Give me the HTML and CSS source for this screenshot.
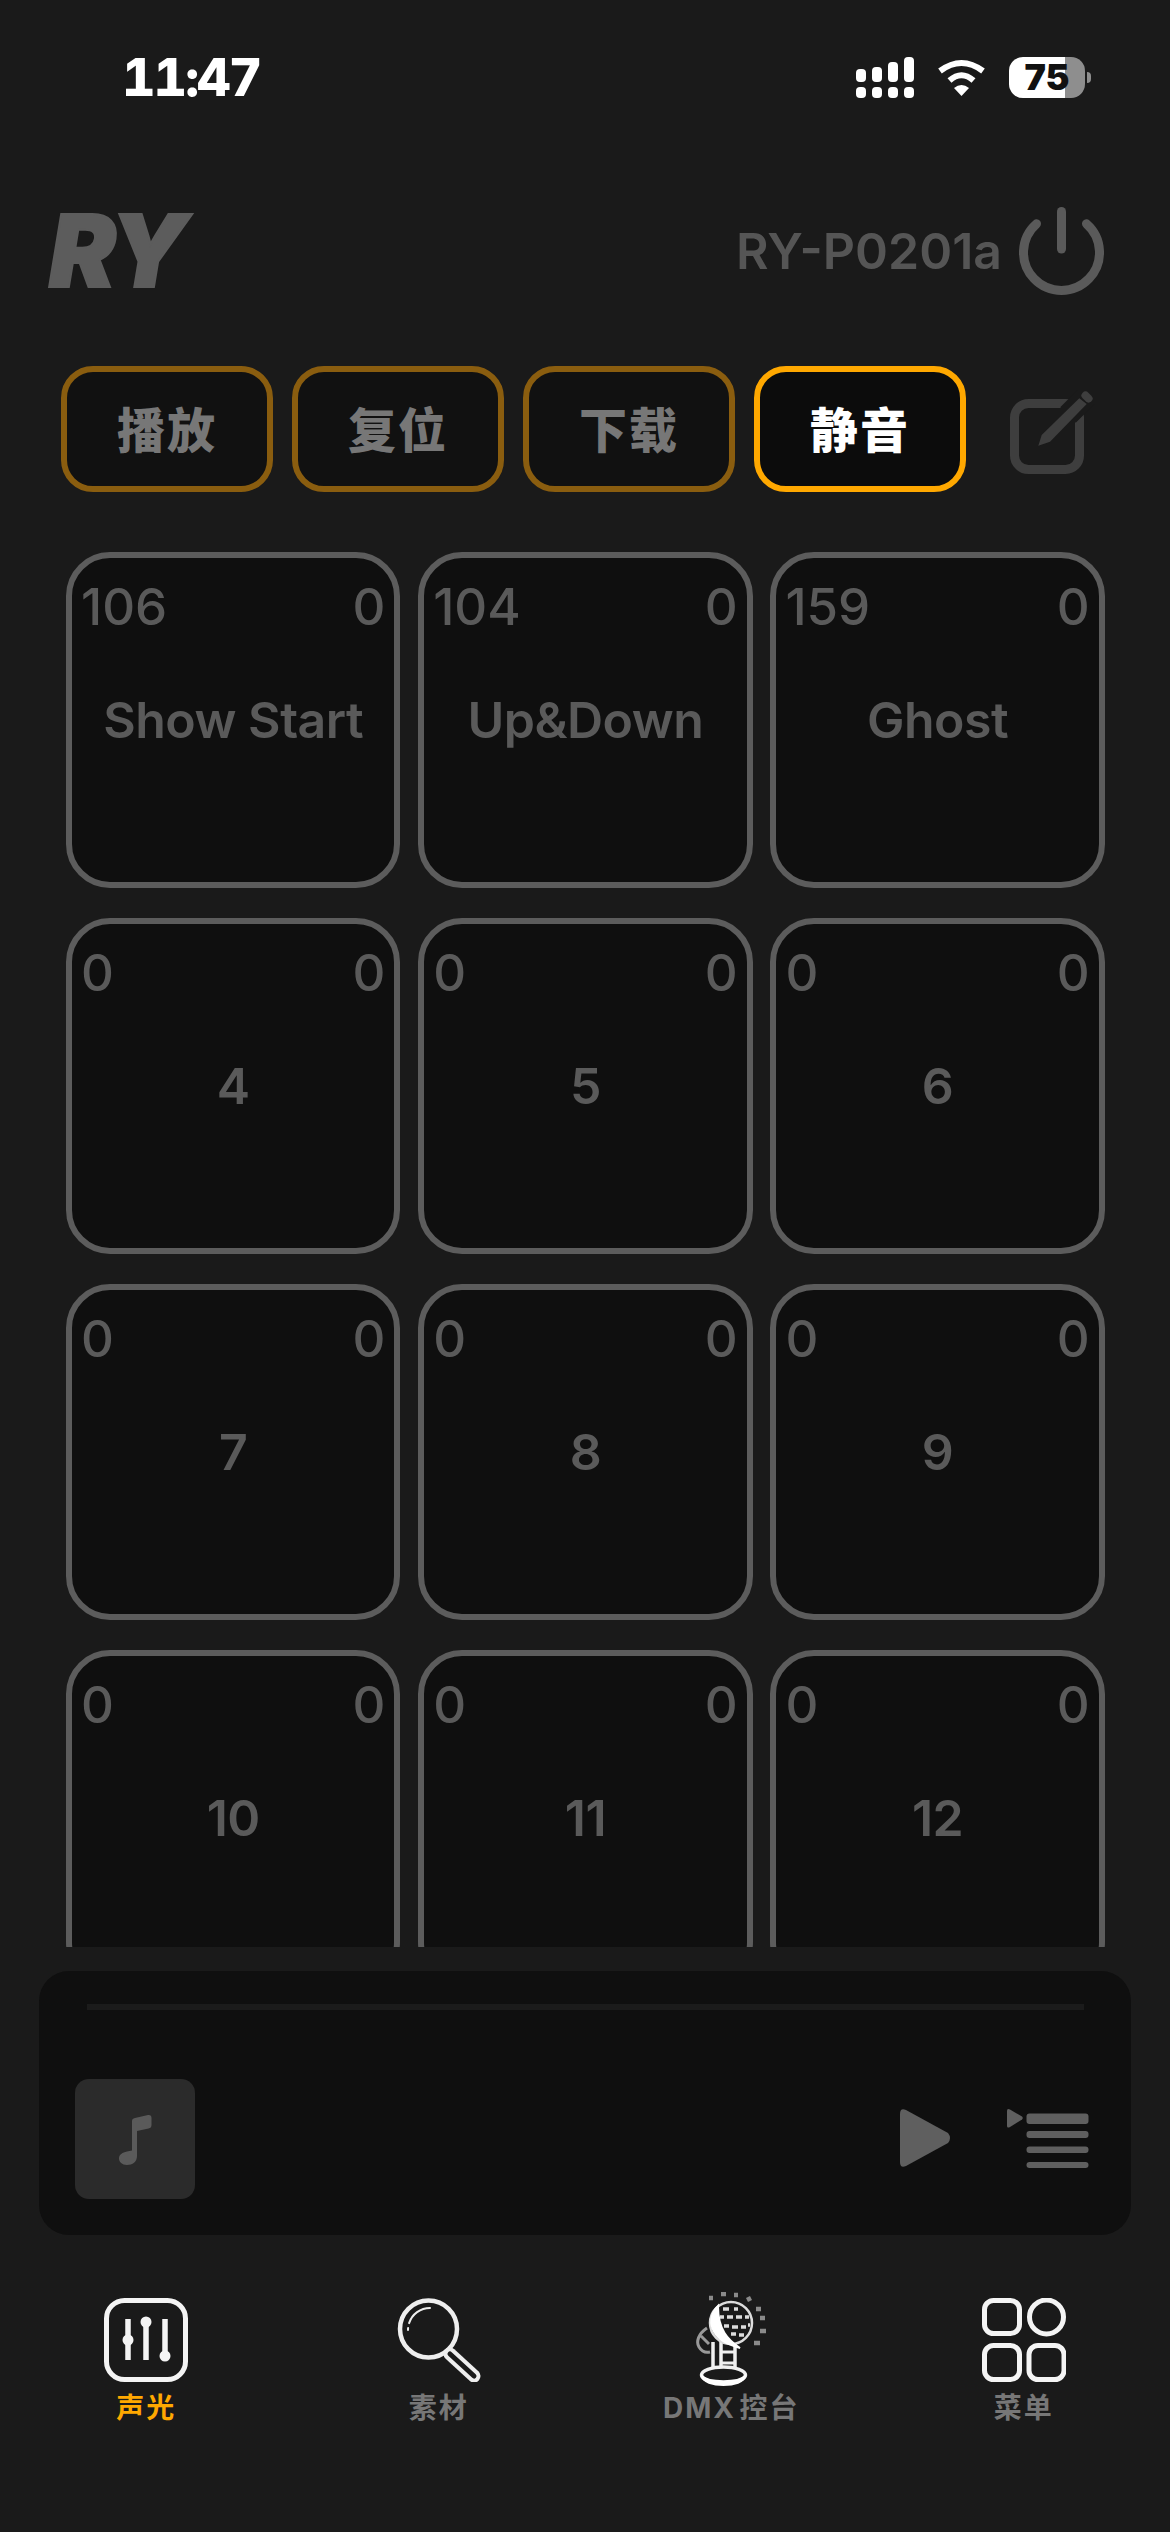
FILE: index.html
```html
<!DOCTYPE html>
<html lang="zh-CN">
<head>
    <meta charset="UTF-8">
    <meta name="viewport" content="width=device-width, initial-scale=1.0">
    <title>RY</title>
    <link rel="stylesheet" href="styles.css">
</head>
<body>
<div class="screen">
    <!-- Status bar -->
    <div class="status-bar">
        <span class="time">11:47</span>
        <div class="status-icons">
            <svg class="signal" width="58" height="41" viewBox="0 0 58 41" fill="#fff">
                <rect x="0" y="12" width="10" height="13" rx="4"/>
                <rect x="16" y="10" width="10" height="15" rx="4"/>
                <rect x="32" y="5" width="10" height="20" rx="4"/>
                <rect x="48" y="0" width="10" height="25" rx="4"/>
                <rect x="0" y="30" width="10" height="11" rx="4"/>
                <rect x="16" y="30" width="10" height="11" rx="4"/>
                <rect x="32" y="30" width="10" height="11" rx="4"/>
                <rect x="48" y="30" width="10" height="11" rx="4"/>
            </svg>
            <svg class="wifi" width="49" height="37" viewBox="0 0 49 37">
                <path d="M3 12 Q24.5 -4 46 12" fill="none" stroke="#fff" stroke-width="6"/>
                <path d="M12.5 21.5 Q24.5 11 36.5 21.5" fill="none" stroke="#fff" stroke-width="6"/>
                <path d="M17 29 Q24.5 23 32 29 L24.5 37 Z" fill="#fff"/>
            </svg>
            <div class="battery">
                <div class="battery-body"><span>75</span></div>
                <div class="battery-nub"></div>
            </div>
        </div>
    </div>

    <!-- Logo and device -->
    <div class="header">
        <div class="logo">RY</div>
        <div class="device">
            <span class="device-name">RY-P0201a</span>
            <svg width="85" height="88" viewBox="0 0 85 88" fill="none" stroke="#5a5a5a" stroke-width="9" stroke-linecap="round">
                <path d="M17.5 16.8 A38 38 0 1 0 67.5 16.8"/>
                <path d="M42.5 4.5 V42"/>
            </svg>
        </div>
    </div>

    <!-- Action buttons -->
    <div class="toolbar">
        <button class="action">播放</button>
        <button class="action">复位</button>
        <button class="action">下载</button>
        <button class="action active">静音</button>
        <svg class="edit-icon" width="85" height="84" viewBox="0 -2 85 84" fill="none">
            <rect x="4.500" y="11.500" width="65" height="66" rx="14" stroke="#3e3e3e" stroke-width="9"/>
            <!-- gap cut out of the box around the pencil -->
            <path d="M58 23 L90 -9" stroke="#1a1a1a" stroke-width="22"/>
            <path d="M28.300 53.700 L31.700 43 L69.300 6.300 L76.700 12 L40 49.700 Z" fill="#3e3e3e"/>
            <path d="M75.500 3.500 L78.500 6.500" stroke="#3e3e3e" stroke-width="8" stroke-linecap="round"/>
        </svg>
    </div>

    <!-- Scene pads, the last row runs under the player -->
    <div class="pads">
        <div class="pad">
            <div class="pad-top"><span>106</span><span>0</span></div>
            <div class="pad-name">Show Start</div>
        </div>
        <div class="pad">
            <div class="pad-top"><span>104</span><span>0</span></div>
            <div class="pad-name">Up&amp;Down</div>
        </div>
        <div class="pad">
            <div class="pad-top"><span>159</span><span>0</span></div>
            <div class="pad-name">Ghost</div>
        </div>
        <div class="pad">
            <div class="pad-top"><span>0</span><span>0</span></div>
            <div class="pad-name">4</div>
        </div>
        <div class="pad">
            <div class="pad-top"><span>0</span><span>0</span></div>
            <div class="pad-name">5</div>
        </div>
        <div class="pad">
            <div class="pad-top"><span>0</span><span>0</span></div>
            <div class="pad-name">6</div>
        </div>
        <div class="pad">
            <div class="pad-top"><span>0</span><span>0</span></div>
            <div class="pad-name">7</div>
        </div>
        <div class="pad">
            <div class="pad-top"><span>0</span><span>0</span></div>
            <div class="pad-name">8</div>
        </div>
        <div class="pad">
            <div class="pad-top"><span>0</span><span>0</span></div>
            <div class="pad-name">9</div>
        </div>
        <div class="pad">
            <div class="pad-top"><span>0</span><span>0</span></div>
            <div class="pad-name">10</div>
        </div>
        <div class="pad">
            <div class="pad-top"><span>0</span><span>0</span></div>
            <div class="pad-name">11</div>
        </div>
        <div class="pad">
            <div class="pad-top"><span>0</span><span>0</span></div>
            <div class="pad-name">12</div>
        </div>
    </div>

    <!-- Player -->
    <div class="player">
        <div class="progress"></div>
        <div class="player-row">
            <div class="cover">
                <svg width="33" height="51" viewBox="0 0 33 51" fill="#5a5a5a">
                    <path d="M13 7 Q13 4.500 16 4 L29 1 Q32.500 0.500 32.500 4 V11 Q32.500 14 29.500 14.500 L18 17 V42 C18 48 13.500 51 8 51 C3 51 0 48 0 44.500 C0 40.500 3.500 38.500 8 37.500 L13 36.500 Z"/>
                </svg>
            </div>
            <div class="player-controls">
                <svg width="52" height="58" viewBox="0 0 52 58" fill="#5f5f5f">
                    <path d="M0 5 Q0 -1.500 6 1 L48 24 Q52 29 48 34 L6 57 Q0 59.500 0 53 Z"/>
                </svg>
                <svg width="82" height="60" viewBox="0 0 82 60" fill="#5f5f5f">
                    <path d="M0 2 Q0 -1 3 0.500 L15 7.500 Q16.500 9 15 10.500 L3 18 Q0 19.500 0 17 Z"/>
                    <rect x="19.500" y="4.500" width="62" height="10.500" rx="3"/>
                    <rect x="19.500" y="22" width="62" height="7" rx="3"/>
                    <rect x="19.500" y="37.500" width="62" height="6.500" rx="3"/>
                    <rect x="19.500" y="53" width="62" height="6" rx="3"/>
                </svg>
            </div>
        </div>
    </div>

    <!-- Bottom tabs -->
    <div class="tabs">
        <div class="tab current">
            <div class="tab-icon">
                <svg width="84" height="84" viewBox="0 0 84 84" fill="none" stroke="#f4f4f4">
                    <rect x="2.500" y="2.500" width="79" height="79" rx="18" stroke-width="5"/>
                    <path d="M24 21 V62 M42 21 V62 M61 21 V62" stroke-width="5.500"/>
                    <circle cx="24" cy="42" r="5.500" fill="#f4f4f4" stroke="none"/>
                    <circle cx="42" cy="24" r="5.500" fill="#f4f4f4" stroke="none"/>
                    <circle cx="61" cy="58" r="5.500" fill="#f4f4f4" stroke="none"/>
                </svg>
            </div>
            <span class="tab-label">声光</span>
        </div>
        <div class="tab">
            <div class="tab-icon">
                <svg width="84" height="84" viewBox="0 0 84 84" fill="none" stroke="#eee" stroke-linecap="round">
                    <circle cx="31.500" cy="31" r="28.500" stroke-width="4.500"/>
                    <path d="M11 32 A22 22 0 0 1 33 10" stroke-width="2" stroke-dasharray="2 5 30"/>
                    <path d="M53 56 L77 78" stroke-width="13"/>
                    <path d="M53 56 L77 78" stroke="#1a1a1a" stroke-width="5"/>
                </svg>
            </div>
            <span class="tab-label">素材</span>
        </div>
        <div class="tab">
            <div class="tab-icon">
                <svg width="71" height="96" viewBox="0 0 71 96" fill="none" stroke="#f0f0f0">
                    <!-- leaves behind the lamp -->
                    <path d="M11 36 C2 42 0 50 3 55 C6 60 10 61 14 60 M5 44 L13 52" stroke="#999" stroke-width="3"/>
                    <!-- stand -->
                    <path d="M17 50 V76 M25 46 V76 M39 52 V76" stroke-width="3.500"/>
                    <path d="M25 60 H39 M25 71 H39" stroke-width="3"/>
                    <!-- lamp head -->
                    <circle cx="35" cy="31" r="21" stroke="#ddd" stroke-width="2.500"/>
                    <path d="M22 14 C10 26 12 48 44 56 C32 48 22 38 22 14 Z" fill="#fff" stroke="#fff" stroke-width="2"/>
                    <path d="M27 17 h6 M38 17 h4 M24 25 h4 M31 25 h6 M40 25 h6 M49 25 h4 M28 34 h5 M36 35 h6 M45 35 h5 M52 33 h2 M35 42 h5 M43 43 h5" stroke="#ddd" stroke-width="3.500"/>
                    <!-- base -->
                    <ellipse cx="27.500" cy="83" rx="22" ry="8" stroke-width="3.500"/>
                    <path d="M6 84 C12 91 43 91 49 84 C48 96 7 96 6 84 Z" fill="#fff" stroke="#fff" stroke-width="2"/>
                    <!-- light rays -->
                    <path d="M13 6 h4 M25 2 h5 M38 3 h4 M51 8 l4 -2 M60 17 h5 M64 26 h5 M64 39 h6 M58 51 h6" stroke="#8a8a8a" stroke-width="4.500"/>
                </svg>
            </div>
            <span class="tab-label">DMX 控台</span>
        </div>
        <div class="tab">
            <div class="tab-icon">
                <svg width="84" height="84" viewBox="0 0 84 84" fill="none" stroke="#f4f4f4" stroke-width="5">
                    <rect x="2.500" y="2.500" width="35" height="33" rx="9"/>
                    <circle cx="64.500" cy="19" r="17"/>
                    <rect x="2.500" y="47.500" width="35" height="34" rx="9"/>
                    <rect x="47" y="47.500" width="35" height="34" rx="9"/>
                </svg>
            </div>
            <span class="tab-label">菜单</span>
        </div>
    </div>
</div>
</body>
</html>
```

FILE: styles.css
```css
* {
    box-sizing: border-box;
}
body {
    margin: 0;
    background-color: #1a1a1a;
    font-family: Inter, "Noto Sans CJK SC", sans-serif;
}
.screen {
    width: 1170px;
    height: 2532px;
    overflow: hidden;
    background-color: #1a1a1a;
}

/* status bar */
.status-bar {
    display: flex;
    justify-content: space-between;
    align-items: center;
    height: 105px;
    padding: 50px 79px 0 122px;
}
.time {
    color: #fff;
    font-size: 52px;
    font-weight: 800;
    font-variant-numeric: tabular-nums;
    letter-spacing: -2px;
    line-height: 55px;
}
.status-icons {
    display: flex;
    align-items: center;
}
.wifi {
    margin-left: 23px;
}
.battery {
    display: flex;
    align-items: center;
    margin-left: 23px;
}
.battery-body {
    width: 76px;
    height: 41px;
    border-radius: 14px;
    background: linear-gradient(to right, #fff 74%, #8e8e8e 74%);
    color: #111;
    font-size: 36px;
    font-weight: 900;
    line-height: 41px;
    text-align: center;
}
.battery-nub {
    width: 4px;
    height: 11px;
    margin-left: 2px;
    border-radius: 0 6px 6px 0;
    background-color: #8e8e8e;
}

/* header */
.header {
    display: flex;
    justify-content: space-between;
    align-items: center;
    height: 88px;
    margin-top: 102px;
    padding: 0 66px 0 49px;
}
.logo {
    color: #5c5c5c;
    font-size: 100px;
    font-weight: 900;
    font-style: italic;
    letter-spacing: -3px;
    line-height: 88px;
    -webkit-text-stroke: 2px #5c5c5c;
}
.device {
    display: flex;
    align-items: center;
    gap: 17px;
}
.device-name {
    color: #555;
    font-size: 50px;
    font-weight: 600;
}

/* buttons */
.toolbar {
    display: flex;
    gap: 19px;
    margin-top: 71px;
    padding-left: 61px;
}
.action {
    width: 212px;
    height: 126px;
    padding: 0 0 5px;
    border: 6px solid #8a5d0f;
    border-radius: 32px;
    background-color: #111;
    color: #777;
    font-family: "Noto Sans CJK SC", sans-serif;
    font-size: 48px;
    font-weight: 900;
    letter-spacing: 2px;
}
.action.active {
    border-color: #ffa800;
    background-color: #0c0c0c;
    color: #fff;
}
.edit-icon {
    margin: 24px 0 0 25px;
}

/* pads */
.pads {
    display: grid;
    grid-template-columns: repeat(3, 334.4px);
    column-gap: 17.8px;
    row-gap: 30px;
    align-content: start;
    height: 1395px;
    margin-top: 60px;
    padding-left: 66px;
    overflow: hidden;
}
.pad {
    display: flex;
    flex-direction: column;
    height: 336px;
    padding: 24px 9px 0;
    border: 6px solid #5c5c5c;
    border-radius: 44px;
    background-color: #0f0f0f;
    color: #5a5a5a;
    font-size: 51px;
    font-weight: 500;
}
.pad-top {
    display: flex;
    justify-content: space-between;
    height: 50px;
    line-height: 50px;
}
.pad-name {
    display: flex;
    justify-content: center;
    align-items: center;
    flex: 1;
    margin-bottom: 74px;
    font-size: 50px;
    font-weight: 600;
    letter-spacing: -0.5px;
    white-space: nowrap;
}

/* player */
.player {
    height: 264px;
    margin: 24px 39px 0;
    padding: 33px 36px 0;
    border-radius: 30px;
    background-color: #0f0f0f;
}
.progress {
    height: 6px;
    margin: 0 11px 0 12px;
    background-color: #1b1b1b;
}
.player-row {
    display: flex;
    justify-content: space-between;
    align-items: center;
    margin-top: 69px;
}
.cover {
    display: flex;
    justify-content: center;
    align-items: center;
    width: 120px;
    height: 120px;
    border-radius: 14px;
    background-color: #2b2b2b;
}
.player-controls {
    display: flex;
    align-items: flex-start;
    gap: 55px;
    margin-right: 6px;
}

/* tabs */
.tabs {
    display: grid;
    grid-template-columns: repeat(4, 1fr);
    padding-top: 57px;
}
.tab {
    display: flex;
    flex-direction: column;
    align-items: center;
}
.tab-icon {
    display: flex;
    justify-content: center;
    align-items: center;
    height: 96px;
}
.tab-label {
    margin-top: 2px;
    color: #777;
    font-size: 28px;
    font-weight: 700;
    letter-spacing: 2px;
    word-spacing: -5px;
    line-height: 36px;
}
.tab.current .tab-label {
    color: #ffa800;
}
```
